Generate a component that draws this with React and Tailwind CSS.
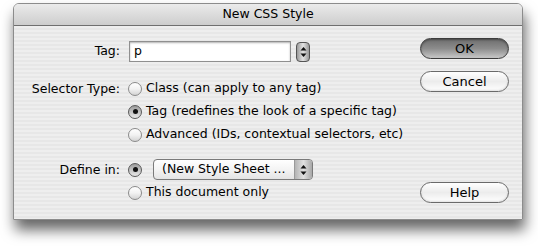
import React from 'react';

// Aqua-style radio button
function Radio({ checked }) {
  return (
    <span
      className={
        'relative inline-flex items-center justify-center w-[14px] h-[14px] rounded-full border shrink-0 ' +
        (checked
          ? 'border-[#5a5a5a] bg-gradient-to-b from-[#9a9a9a] via-[#c4c4c4] to-[#e8e8e8]'
          : 'border-[#8a8a8a] bg-gradient-to-b from-[#ffffff] via-[#f2f2f2] to-[#d4d4d4]')
      }
    >
      {checked && <span className="w-[5px] h-[5px] rounded-full bg-[#111]" />}
    </span>
  );
}

function RadioRow({ checked, label, className = '' }) {
  return (
    <div className={'flex items-center gap-[4px] h-[23px] ' + className}>
      <Radio checked={checked} />
      <span>{label}</span>
    </div>
  );
}

function Arrows({ className = '' }) {
  return (
    <svg width="7" height="12" viewBox="0 0 7 12" className={className}>
      <path d="M3.5 1 L6.5 4.5 L0.5 4.5 Z" fill="#111" />
      <path d="M3.5 11 L6.5 7.5 L0.5 7.5 Z" fill="#111" />
    </svg>
  );
}

function AquaButton({ label, primary }) {
  return (
    <button
      className={
        'w-[89px] h-[21px] rounded-full border flex items-center justify-center text-[13px] leading-none text-black ' +
        (primary
          ? 'border-[#3c3c3c] bg-gradient-to-b from-[#6e6e6e] via-[#8c8c8c] to-[#c8c8c8] shadow-[inset_0_1px_2px_rgba(0,0,0,0.35)]'
          : 'border-[#6a6a6a] bg-gradient-to-b from-[#ffffff] via-[#ececec] to-[#ffffff] shadow-[inset_0_-1px_2px_rgba(0,0,0,0.12)]')
      }
    >
      {label}
    </button>
  );
}

export default function App() {
  return (
    <div className="min-h-screen bg-white font-['DejaVu_Sans',sans-serif] text-[12.5px] text-black">
      <div className="pl-[13px] pt-[3px]">
        <div className="w-[510px] h-[217px] flex flex-col rounded-t-[6px] border border-[#8c8c8c] overflow-hidden shadow-[2px_10px_14px_rgba(0,0,0,0.6)]">
          {/* title bar */}
          <div className="h-[22px] shrink-0 flex items-center justify-center border-b border-[#6f6f6f] bg-gradient-to-b from-[#ebebeb] to-[#cdcdcd] text-[12.5px]">
            New CSS Style
          </div>

          {/* body */}
          <div className="flex-1 flex bg-[repeating-linear-gradient(180deg,#eeeeee_0px,#eeeeee_2px,#e7e7e7_2px,#e7e7e7_4px)]">
            {/* form */}
            <div className="flex-1 pt-[15px]">
              <div className="flex items-center h-[21px]">
                <span className="w-[106px] text-right">Tag:</span>
                <div className="ml-[9px] w-[162px] h-[21px] border border-[#8f8f8f] bg-white shadow-[inset_0_1px_2px_rgba(0,0,0,0.3)] flex items-center px-[4px]">
                  p
                </div>
                <div className="ml-[5px] w-[14px] h-[20px] rounded-[4px] border border-[#555] bg-gradient-to-r from-[#9a9a9a] via-[#e4e4e4] to-[#9a9a9a] flex items-center justify-center">
                  <Arrows />
                </div>
              </div>

              <div className="flex mt-[15px]">
                <span className="w-[106px] text-right h-[23px] leading-[23px]">Selector Type:</span>
                <div className="ml-[8px]">
                  <RadioRow label="Class (can apply to any tag)" />
                  <RadioRow checked label="Tag (redefines the look of a specific tag)" />
                  <RadioRow label="Advanced (IDs, contextual selectors, etc)" />
                </div>
              </div>

              <div className="flex mt-[12px]">
                <span className="w-[106px] text-right h-[23px] leading-[23px]">Define in:</span>
                <div className="ml-[8px]">
                  <div className="flex items-center h-[23px]">
                    <Radio checked />
                    <div className="ml-[11px] w-[160px] h-[21px] rounded-[4px] border border-[#7a7a7a] bg-gradient-to-b from-[#ffffff] via-[#f4f4f4] to-[#e4e4e4] flex items-center overflow-hidden">
                      <span className="flex-1 pl-[8px] whitespace-nowrap">(New Style Sheet ...</span>
                      <div className="w-[18px] h-full border-l border-[#9a9a9a] bg-gradient-to-r from-[#b4b4b4] via-[#e0e0e0] to-[#a8a8a8] flex items-center justify-center">
                        <Arrows />
                      </div>
                    </div>
                  </div>
                  <RadioRow label="This document only" />
                </div>
              </div>
            </div>

            {/* buttons */}
            <div className="w-[102px] pr-[13px] pt-[12px] pb-[16px] flex flex-col items-end">
              <AquaButton label="OK" primary />
              <div className="mt-[12px]">
                <AquaButton label="Cancel" />
              </div>
              <div className="mt-auto">
                <AquaButton label="Help" />
              </div>
            </div>
          </div>
        </div>
      </div>
    </div>
  );
}
